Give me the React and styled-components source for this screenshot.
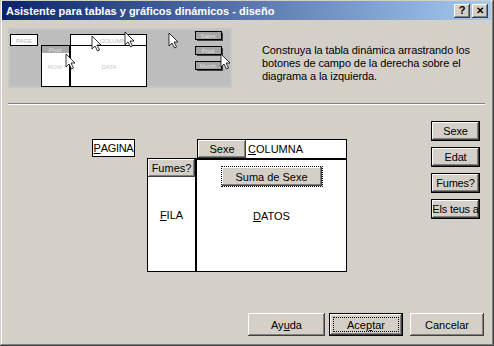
import styled, { createGlobalStyle } from 'styled-components'

const GlobalStyle = createGlobalStyle`
	html, body {
		margin: 0;
		padding: 0;
		background: #d4d0c8;
	}
	body {
		font-family: "Liberation Sans", Arial, sans-serif;
		font-size: 11px;
		color: #000;
	}
`

const face = '#d4d0c8'

function Cursor({ x, y }) {
	return (
		<path
			transform={`translate(${x} ${y})`}
			d="M0 0 L0 13 L3 10 L5.5 15 L7.5 14 L5 9 L9 9 Z"
			fill="#fff"
			stroke="#000"
			strokeWidth="0.8"
		/>
	)
}

function MiniButton({ y, label }) {
	return (
		<g>
			<rect x="189" y={y + 2} width="26" height="8" fill="#404040" />
			<rect x="187.5" y={y + 0.5} width="26" height="8" fill="#a4a4a4" stroke="#000" />
			<text x="200" y={y + 7} fontSize="6" fill="#e0e0e0" textAnchor="middle">{label}</text>
		</g>
	)
}

function Preview() {
	return (
		<svg width="224" height="60" viewBox="0 0 224 60">
			<rect x="0" y="0" width="224" height="60" fill="#c6c6c6" />
			<rect x="2" y="2" width="220" height="56" fill="#bdbdbd" />
			<rect x="2.5" y="6.5" width="27" height="11" fill="#fff" stroke="#000" />
			<text x="16" y="14.5" fontSize="6" fill="#b8b8b8" textAnchor="middle">PAGE</text>
			<rect x="62.5" y="6.5" width="76" height="11" fill="#fff" stroke="#000" />
			<text x="105" y="14.5" fontSize="6" fill="#b8b8b8" textAnchor="middle">COLUMN</text>
			<rect x="33.5" y="17.5" width="28" height="41" fill="#fff" stroke="#000" />
			<rect x="62.5" y="17.5" width="76" height="41" fill="#fff" stroke="#000" />
			<rect x="34" y="18" width="27" height="7" fill="#a8a8a8" />
			<text x="47" y="24" fontSize="6" fill="#e0e0e0" textAnchor="middle">Prod</text>
			<text x="47" y="41" fontSize="6" fill="#c8c8c8" textAnchor="middle">ROW</text>
			<text x="101" y="41" fontSize="6" fill="#c8c8c8" textAnchor="middle">DATA</text>
			<MiniButton y={3} label="Sales" />
			<MiniButton y={18} label="Prod" />
			<MiniButton y={33} label="Month" />
			<Cursor x={84} y={8} />
			<Cursor x={117} y={4} />
			<Cursor x={161} y={5} />
			<Cursor x={58} y={26} />
			<Cursor x={213} y={26} />
		</svg>
	)
}

function App() {
	return (
		<>
			<GlobalStyle />
			<Window>
				<TitleBar>
					<Title>Asistente para tablas y gráficos dinámicos - diseño</Title>
					<CaptionButton>?</CaptionButton>
					<CaptionButton $close>✕</CaptionButton>
				</TitleBar>
				<Body>
					<TopSection>
						<PreviewFrame>
							<Preview />
						</PreviewFrame>
						<Description>
							Construya la tabla dinámica arrastrando los botones de campo de la derecha sobre el
							diagrama a la izquierda.
						</Description>
					</TopSection>
					<Separator />
					<Middle>
						<Diagram>
							<PageBox>
								<u>P</u>AGINA
							</PageBox>
							<ColumnBox>
								<FieldButton $width="48px">Sexe</FieldButton>
								<AreaLabel>
									<u>C</u>OLUMNA
								</AreaLabel>
							</ColumnBox>
							<RowArea>
								<FieldButton $width="100%">Fumes?</FieldButton>
								<CenterLabel>
									<u>F</u>ILA
								</CenterLabel>
							</RowArea>
							<DataArea>
								<DataButton>Suma de Sexe</DataButton>
								<CenterLabel>
									<u>D</u>ATOS
								</CenterLabel>
							</DataArea>
						</Diagram>
						<FieldList>
							<ListButton>Sexe</ListButton>
							<ListButton>Edat</ListButton>
							<ListButton>Fumes?</ListButton>
							<ListButton>Els teus a</ListButton>
						</FieldList>
					</Middle>
					<Footer>
						<PushButton $width="77px">
							Ay<u>u</u>da
						</PushButton>
						<PushButton $width="74px" $default>
							<FocusText>
								Ace<u>p</u>tar
							</FocusText>
						</PushButton>
						<PushButton $width="74px" $gap="7px">
							Cancelar
						</PushButton>
					</Footer>
				</Body>
			</Window>
		</>
	)
}

export default App

const Window = styled.div`
	width: 494px;
	height: 346px;
	box-sizing: border-box;
	background: ${face};
	padding: 1px 3px 3px 2px;
	display: flex;
	flex-direction: column;
	box-shadow: inset -1px -1px #404040, inset 1px 1px ${face}, inset -2px -2px #808080,
		inset 2px 2px #fff;
	overflow: hidden;
`

const TitleBar = styled.div`
	height: 19px;
	display: flex;
	align-items: center;
	padding: 0 3px 0 4px;
	background: linear-gradient(to right, #0a246a, #a6caf0);
	gap: 2px;
	flex-shrink: 0;
`

const Title = styled.div`
	flex: 1;
	color: #fff;
	font-weight: bold;
	font-size: 11px;
	white-space: nowrap;
`

const CaptionButton = styled.div`
	width: 16px;
	height: 14px;
	box-sizing: border-box;
	background: ${face};
	display: flex;
	align-items: center;
	justify-content: center;
	font-weight: bold;
	font-size: ${(p) => (p.$close ? '10px' : '11px')};
	line-height: 1;
	box-shadow: inset -1px -1px #404040, inset 1px 1px #fff, inset -2px -2px #808080;
`

const Body = styled.div`
	flex: 1;
	display: flex;
	flex-direction: column;
	padding: 0 5px 0 6px;
`

const TopSection = styled.div`
	display: flex;
	align-items: flex-start;
	margin-top: 8px;
	height: 60px;
`

const PreviewFrame = styled.div`
	width: 224px;
	height: 60px;
	flex-shrink: 0;
`

const Description = styled.p`
	margin: 16px 0 0 30px;
	width: 212px;
	line-height: 13px;
	letter-spacing: -0.1px;
`

const Separator = styled.div`
	margin-top: 15px;
	border-top: 1px solid #808080;
	border-bottom: 1px solid #fff;
	height: 0;
	margin-right: 1px;
`

const Middle = styled.div`
	display: flex;
	align-items: flex-start;
	height: 208px;
`

const Diagram = styled.div`
	display: grid;
	grid-template-columns: 43px 13px 49px 150px;
	grid-template-rows: 19px 114px;
	margin: 34px 0 0 84px;
`

const PageBox = styled.div`
	grid-column: 1;
	grid-row: 1;
	background: #fff;
	border: 1px solid #000;
	height: 18px;
	box-sizing: border-box;
	display: flex;
	align-items: center;
	justify-content: center;
	letter-spacing: -0.3px;
	white-space: nowrap;
`

const ColumnBox = styled.div`
	grid-column: 4;
	grid-row: 1;
	background: #fff;
	border: 1px solid #000;
	border-bottom: none;
	display: flex;
	align-items: stretch;
`

const FieldButton = styled.div`
	grid-area: 1 / 1;
	align-self: start;
	z-index: 1;
	width: ${(p) => p.$width};
	box-sizing: border-box;
	background: ${face};
	display: flex;
	align-items: center;
	justify-content: center;
	height: 18px;
	box-shadow: inset -1px -1px #404040, inset 1px 1px #fff, inset -2px -2px #808080;
`

const AreaLabel = styled.div`
	display: flex;
	align-items: center;
	padding-left: 2px;
`

const RowArea = styled.div`
	grid-column: 3;
	grid-row: 2;
	background: #fff;
	border: 1px solid #000;
	border-right: 2px solid #000;
	display: grid;
	margin-left: -1px;
`

const DataArea = styled.div`
	grid-column: 4;
	grid-row: 2;
	background: #fff;
	border: 1px solid #000;
	border-top: 2px solid #000;
	border-left: none;
	display: grid;
	justify-items: center;
`

const CenterLabel = styled.div`
	grid-area: 1 / 1;
	align-self: center;
	justify-self: center;
`

const DataButton = styled.div`
	grid-area: 1 / 1;
	align-self: start;
	margin-top: 7px;
	width: 100px;
	height: 19px;
	box-sizing: border-box;
	background: ${face};
	outline: 1px dotted #000;
	outline-offset: 0px;
	display: flex;
	align-items: center;
	justify-content: center;
	z-index: 1;
	box-shadow: inset -1px -1px #404040, inset -2px -2px #808080, inset 1px 1px #fff;
`

const FieldList = styled.div`
	margin: 16px 6px 0 auto;
	display: flex;
	flex-direction: column;
	gap: 6px;
`

const ListButton = styled.div`
	width: 49px;
	height: 20px;
	box-sizing: border-box;
	background: ${face};
	display: flex;
	align-items: center;
	justify-content: center;
	white-space: nowrap;
	overflow: hidden;
	font-size: 11px;
	letter-spacing: -0.2px;
	border: 1px solid #000;
	box-shadow: inset -1px -1px #404040, inset 1px 1px #fff, inset -2px -2px #808080;
`

const Footer = styled.div`
	display: flex;
	justify-content: flex-end;
	padding-right: 2px;
`

const PushButton = styled.div`
	width: ${(p) => p.$width};
	height: 23px;
	margin-left: ${(p) => p.$gap || '4px'};
	box-sizing: border-box;
	background: ${face};
	display: flex;
	align-items: center;
	justify-content: center;
	font-size: 11px;
	border: ${(p) => (p.$default ? '1px solid #000' : 'none')};
	box-shadow: inset -1px -1px #404040, inset 1px 1px #fff, inset -2px -2px #808080;
`

const FocusText = styled.span`
	display: flex;
	align-items: center;
	justify-content: center;
	width: calc(100% - 8px);
	height: calc(100% - 8px);
	outline: 1px dotted #000;
`
